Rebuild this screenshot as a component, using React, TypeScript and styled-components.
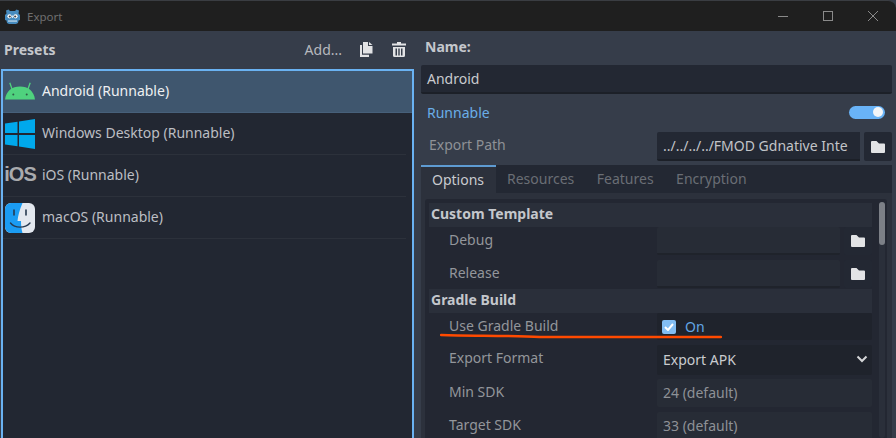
import React from 'react'

import styled, { createGlobalStyle } from 'styled-components'

const GlobalStyle = createGlobalStyle`
  html, body {
    margin: 0;
    padding: 0;
    background: #363d4a;
    overflow: hidden;
  }
  * {
    box-sizing: border-box;
  }
`

const Window = styled.div`
  position: relative;
  width: 896px;
  height: 438px;
  overflow: hidden;
  display: flex;
  flex-direction: column;
  background: #363d4a;
  font-family: 'Noto Sans', sans-serif;
  font-size: 14px;
  color: #c6c8cc;
`

const TitleBar = styled.div`
  flex: none;
  height: 31px;
  display: flex;
  align-items: center;
  background: #1f1f1f;
  border-top: 1px solid #3a3d42;
  padding-left: 5px;
  border-top-right-radius: 8px;
`

const TitleText = styled.span`
  margin-left: 7px;
  font-size: 11.5px;
  color: #6f6f6f;
`

const WindowButtons = styled.div`
  margin-left: auto;
  display: flex;
  align-items: center;
  gap: 35px;
  padding-right: 18px;
  color: #8a8a8a;
`

const Body = styled.div`
  flex: 1;
  min-height: 0;
  display: flex;
`

const PresetColumn = styled.div`
  flex: none;
  width: 421px;
  display: flex;
  flex-direction: column;
`

const PresetHeader = styled.div`
  flex: none;
  height: 38px;
  display: flex;
  align-items: center;
  padding: 0 15px 2px 4px;
  gap: 19px;
`

const BoldLabel = styled.span`
  font-weight: 700;
  font-size: 14px;
  color: #c4c7cc;
  margin-right: auto;
`

const AddLabel = styled.span`
  color: #b6b9be;
  margin-right: -1px;
`

const PresetList = styled.div`
  flex: 1;
  margin: 0 7px 0 1px;
  border: 2px solid #6ab2f2;
  border-bottom: none;
  background: #222732;
`

const PresetRow = styled.div<{ $selected?: boolean }>`
  height: 42px;
  display: flex;
  align-items: center;
  padding-left: 2px;
  gap: 7px;
  color: ${(p) => (p.$selected ? '#eef0f2' : '#bcbec3')};
  background: ${(p) => (p.$selected ? '#3f566e' : 'transparent')};
  box-shadow: inset 0 -1px 0 ${(p) => (p.$selected ? '#47607a' : '#2c313b')};
  margin-right: ${(p) => (p.$selected ? '0' : '6px')};
`

const PresetName = styled.span`
  padding-bottom: 3px;
`

const IconSlot = styled.span`
  flex: none;
  width: 30px;
  height: 30px;
  display: flex;
  align-items: center;
  justify-content: center;
`

const AndroidSlot = styled.svg`
  margin-bottom: 2px;
`

const IosMark = styled.span`
  font-family: 'Liberation Sans', sans-serif;
  font-weight: 700;
  font-size: 20px;
  letter-spacing: -1px;
  padding-bottom: 3px;
  color: #a9abae;
`

const DetailColumn = styled.div`
  flex: 1;
  min-width: 0;
  display: flex;
  flex-direction: column;
  padding-right: 4px;
`

const NameLabel = styled.div`
  height: 34px;
  padding: 6px 0 0 4px;
  font-weight: 700;
  color: #c4c7cc;
`

const NameInput = styled.div`
  height: 29px;
  line-height: 27px;
  padding-left: 6px;
  background: #232833;
  border-bottom: 2px solid #1c2028;
  border-radius: 2px;
  color: #c9cbcf;
`

const RunnableRow = styled.div`
  height: 38px;
  display: flex;
  align-items: center;
  justify-content: space-between;
  padding: 0 7px 2px 6px;
  color: #6aaee8;
`

const Toggle = styled.span`
  width: 36px;
  height: 13px;
  border-radius: 7px;
  background: #69b3f7;
  display: flex;
  justify-content: flex-end;
  align-items: center;
  padding-right: 2px;
`

const ToggleKnob = styled.span`
  width: 10px;
  height: 10px;
  border-radius: 50%;
  background: #f4f6f8;
`

const PathRow = styled.div`
  height: 29px;
  display: flex;
  align-items: center;
  padding-left: 8px;
`

const MutedLabel = styled.span`
  color: #8e9196;
  margin-right: auto;
  padding-bottom: 4px;
`

const PathField = styled.div`
  width: 203px;
  height: 29px;
  line-height: 27px;
  padding-left: 6px;
  background: #232833;
  border-bottom: 2px solid #1c2028;
  border-radius: 2px 0 0 2px;
  color: #c2c4c8;
  white-space: nowrap;
  overflow: hidden;
`

const FolderButton = styled.div`
  flex: none;
  width: 28px;
  height: 100%;
  margin-left: 4px;
  display: flex;
  align-items: center;
  justify-content: center;
  background: #232833;
  border-radius: 2px;
`

const TabBar = styled.div`
  flex: none;
  margin-top: 4px;
  height: 28px;
  display: flex;
  background: #232833;
`

const Tab = styled.div<{ $active?: boolean }>`
  display: flex;
  align-items: center;
  height: 100%;
  padding: 0 11px 2px;
  margin-right: ${(p) => (p.$active ? '0' : '0.5px')};
  width: ${(p) => (p.$active ? '75px' : 'auto')};
  color: ${(p) => (p.$active ? '#c9cbcf' : '#6a6e75')};
  background: ${(p) => (p.$active ? '#2c313c' : 'transparent')};
  border-top: ${(p) => (p.$active ? '2px solid #5e9bd2' : 'none')};
`

const TabPanel = styled.div`
  flex: 1;
  min-height: 0;
  display: flex;
  padding: 6px 5px 0 4px;
  background: #2c313c;
  overflow: hidden;
`

const Frame = styled.div`
  flex: 1;
  min-width: 0;
  display: flex;
  gap: 7px;
  padding: 4px 2px 0 4px;
  background: #232732;
  border-radius: 3px 3px 0 0;
`

const Inspector = styled.div`
  flex: 1;
  min-width: 0;
  display: flex;
  flex-direction: column;
`

const Section = styled.div<{ $top: number }>`
  flex: none;
  height: 24px;
  line-height: 22px;
  margin-top: ${(p) => p.$top}px;
  padding-left: 2px;
  background: #2a2f3a;
  font-weight: 700;
  color: #c4c7cc;
`

const PropRow = styled.div<{ $height: number; $top?: number }>`
  flex: none;
  height: ${(p) => p.$height}px;
  margin-top: ${(p) => p.$top ?? 0}px;
  display: flex;
  align-items: stretch;
`

const PropName = styled.span`
  flex: none;
  width: 228px;
  padding: 1px 0 0 20px;
  line-height: 24px;
  color: #93969b;
`

const PropValue = styled.div<{ $dark?: boolean }>`
  flex: 1;
  min-width: 0;
  display: flex;
  align-items: center;
  gap: 9px;
  padding: 0 6px;
  background: ${(p) => (p.$dark ? '#1f232c' : '#272c36')};
  border-radius: 2px;
  color: #8e9196;
`

const PathValue = styled(PropValue)`
  border-bottom: 2px solid #1f232b;
`

const NumberValue = styled(PropValue)`
  padding-bottom: 2px;
`

const SelectValue = styled(PropValue)`
  background: #1f232c;
  color: #c9cbcf;
  justify-content: space-between;
  padding: 0 4px 2px 6px;
`

const CheckBox = styled.span`
  flex: none;
  width: 14px;
  height: 14px;
  margin-left: -1px;
  border-radius: 2px;
  background: #82bdf3;
  display: flex;
  align-items: center;
  justify-content: center;
`

const OnText = styled.span`
  color: #62a6e4;
`

const Scrollbar = styled.div`
  flex: none;
  width: 6px;
  margin-top: -1px;
  align-self: stretch;
  background: #2a2f3a;
  border-radius: 3px;
`

const ScrollThumb = styled.div`
  height: 43px;
  background: #7c8087;
  border-radius: 3px;
`

const RedLine = styled.svg`
  position: absolute;
  left: 440px;
  top: 331px;
  pointer-events: none;
`

const FolderIcon = () => (
  <svg width="14" height="12" viewBox="0 0 14 12">
    <path d="M0 1 Q0 0 1 0 H5.5 L8 2.5 H13 Q14 2.5 14 3.5 V11 Q14 12 13 12 H1 Q0 12 0 11 Z" fill="#e2e3e5" />
  </svg>
)

const GodotIcon = () => (
  <svg width="15" height="15" viewBox="0 0 15 15">
    <path d="M0 6 L1.5 4.5 L1 1.5 L3.5 0.5 L5 2 H10 L11.5 0.5 L14 1.5 L13.5 4.5 L15 6 V11 L13.5 11.5 L13 14 L11 15 H4 L2 14 L1.5 11.5 L0 11 Z" fill="#478cbf" />
    <circle cx="4.5" cy="7.3" r="2.1" fill="#fff" />
    <circle cx="10.5" cy="7.3" r="2.1" fill="#fff" />
    <circle cx="4.8" cy="7.5" r="1.1" fill="#414042" />
    <circle cx="10.2" cy="7.5" r="1.1" fill="#414042" />
    <path d="M3 11.5 H12 V12.6 H3 Z" fill="#d5e5f0" />
    <rect x="7" y="6.5" width="1" height="2.5" fill="#d5e5f0" />
  </svg>
)

const AndroidIcon = () => (
  <AndroidSlot width="30" height="18" viewBox="0 0 30 18">
    <path d="M0 17.5 C1 9 7 4.5 15 4.5 C23 4.5 29 9 30 17.5 Z" fill="#4fd27e" />
    <path d="M7 7 L4.8 0.8 M23 7 L25.2 0.8" stroke="#4fd27e" strokeWidth="1.3" />
    <circle cx="8.3" cy="12.5" r="1" fill="#2f5d47" />
    <circle cx="21.7" cy="12.5" r="1" fill="#2f5d47" />
  </AndroidSlot>
)

const WindowsIcon = () => (
  <svg width="30" height="30" viewBox="0 0 30 30">
    <path d="M0 4.5 L12.5 2.7 V14 H0 Z M14 2.4 L30 0 V14 H14 Z M0 16 H12.5 V27.3 L0 25.5 Z M14 16 H30 V30 L14 27.6 Z" fill="#00a9ec" />
  </svg>
)

const FinderIcon = () => (
  <svg width="30" height="30" viewBox="0 0 30 30">
    <rect width="30" height="30" rx="6" fill="#e3e8ef" />
    <path d="M6 0 H17.5 C14.5 7 13 13 12.5 18 H16 C16 22 16.3 26 17.5 30 H6 A6 6 0 0 1 0 24 V6 A6 6 0 0 1 6 0 Z" fill="#1b9cf3" />
    <path d="M9 7 V12 M21 7 V12" stroke="#273a50" strokeWidth="1.6" strokeLinecap="round" />
    <path d="M5.5 20 C10 25.5 20 25.5 25 20" fill="none" stroke="#273a50" strokeWidth="1.4" strokeLinecap="round" />
  </svg>
)

const DuplicateIcon = () => (
  <svg width="13" height="15" viewBox="0 0 13 15">
    <path d="M3 0 H8 V4 H12.5 V11.5 H3 Z" fill="#e2e3e5" />
    <path d="M9 0 L12.5 3 H9 Z" fill="#e2e3e5" />
    <path d="M0 3 H2 V12.7 H9 V15 H0 Z" fill="#e2e3e5" />
  </svg>
)

const TrashIcon = () => (
  <svg width="14" height="15" viewBox="0 0 14 15">
    <path d="M5 0 H9 V1.5 H14 V3.5 H0 V1.5 H5 Z" fill="#e2e3e5" />
    <path d="M1 5 H13 V13.5 Q13 15 11.5 15 H2.5 Q1 15 1 13.5 Z M3.5 6.5 V13.5 H5 V6.5 Z M6.3 6.5 V13.5 H7.7 V6.5 Z M9 6.5 V13.5 H10.5 V6.5 Z" fill="#e2e3e5" fillRule="evenodd" />
  </svg>
)

const presets = [
  { name: 'Android (Runnable)', icon: <AndroidIcon />, selected: true },
  { name: 'Windows Desktop (Runnable)', icon: <WindowsIcon /> },
  { name: 'iOS (Runnable)', icon: <IosMark>iOS</IosMark> },
  { name: 'macOS (Runnable)', icon: <FinderIcon /> },
]

const App: React.FC = () => {
  return (
    <Window>
      <GlobalStyle />
      <TitleBar>
        <GodotIcon />
        <TitleText>Export</TitleText>
        <WindowButtons>
          <svg width="10" height="10" viewBox="0 0 10 10">
            <path d="M0 5.5 H10" stroke="currentColor" />
          </svg>
          <svg width="10" height="10" viewBox="0 0 10 10">
            <rect x="0.5" y="0.5" width="9" height="9" fill="none" stroke="currentColor" />
          </svg>
          <svg width="10" height="10" viewBox="0 0 10 10">
            <path d="M0 0 L10 10 M10 0 L0 10" stroke="currentColor" />
          </svg>
        </WindowButtons>
      </TitleBar>
      <Body>
        <PresetColumn>
          <PresetHeader>
            <BoldLabel>Presets</BoldLabel>
            <AddLabel>Add...</AddLabel>
            <DuplicateIcon />
            <TrashIcon />
          </PresetHeader>
          <PresetList>
            {presets.map((preset) => (
              <PresetRow key={preset.name} $selected={preset.selected}>
                <IconSlot>{preset.icon}</IconSlot>
                <PresetName>{preset.name}</PresetName>
              </PresetRow>
            ))}
          </PresetList>
        </PresetColumn>
        <DetailColumn>
          <NameLabel>Name:</NameLabel>
          <NameInput>Android</NameInput>
          <RunnableRow>
            Runnable
            <Toggle>
              <ToggleKnob />
            </Toggle>
          </RunnableRow>
          <PathRow>
            <MutedLabel>Export Path</MutedLabel>
            <PathField>../../../../FMOD Gdnative Inte</PathField>
            <FolderButton>
              <FolderIcon />
            </FolderButton>
          </PathRow>
          <TabBar>
            <Tab $active>Options</Tab>
            <Tab>Resources</Tab>
            <Tab>Features</Tab>
            <Tab>Encryption</Tab>
          </TabBar>
          <TabPanel>
            <Frame>
              <Inspector>
                <Section $top={0}>Custom Template</Section>
                <PropRow $height={28}>
                  <PropName>Debug</PropName>
                  <PathValue />
                  <FolderButton>
                    <FolderIcon />
                  </FolderButton>
                </PropRow>
                <PropRow $height={28} $top={5}>
                  <PropName>Release</PropName>
                  <PathValue />
                  <FolderButton>
                    <FolderIcon />
                  </FolderButton>
                </PropRow>
                <Section $top={1}>Gradle Build</Section>
                <PropRow $height={27}>
                  <PropName>Use Gradle Build</PropName>
                  <PropValue $dark>
                    <CheckBox>
                      <svg width="10" height="8" viewBox="0 0 10 8">
                        <path d="M1 4 L4 7 L9 1" fill="none" stroke="#fff" strokeWidth="2" />
                      </svg>
                    </CheckBox>
                    <OnText>On</OnText>
                  </PropValue>
                </PropRow>
                <PropRow $height={30} $top={5}>
                  <PropName>Export Format</PropName>
                  <SelectValue>
                    Export APK
                    <svg width="12" height="8" viewBox="0 0 12 8">
                      <path d="M1.5 1.5 L6 6 L10.5 1.5" fill="none" stroke="#d5d6d8" strokeWidth="2" />
                    </svg>
                  </SelectValue>
                </PropRow>
                <PropRow $height={28} $top={4}>
                  <PropName>Min SDK</PropName>
                  <NumberValue>24 (default)</NumberValue>
                </PropRow>
                <PropRow $height={28} $top={5}>
                  <PropName>Target SDK</PropName>
                  <NumberValue>33 (default)</NumberValue>
                </PropRow>
              </Inspector>
              <Scrollbar>
                <ScrollThumb />
              </Scrollbar>
            </Frame>
          </TabPanel>
        </DetailColumn>
      </Body>
      <RedLine width="282" height="10" viewBox="0 0 282 10">
        <path d="M1 4 C30 5 70 4.5 100 6 C150 6.5 220 6 281 6" fill="none" stroke="#ff4a00" strokeWidth="2.5" strokeLinecap="round" />
      </RedLine>
    </Window>
  )
}

export default App
